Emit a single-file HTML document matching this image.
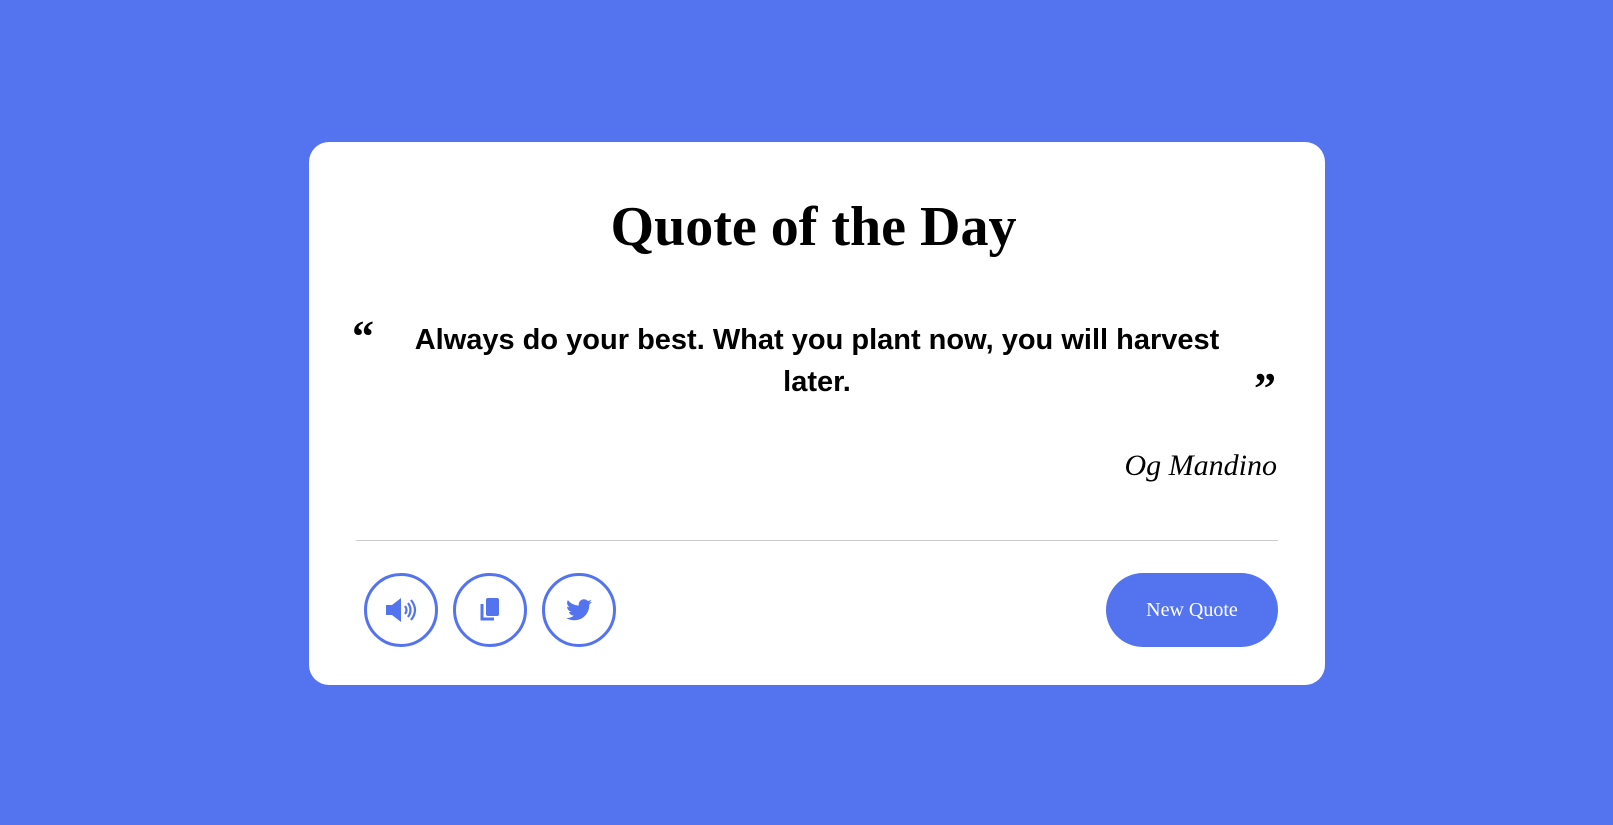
<!DOCTYPE html>
<html><head><style>
body{margin:0;width:1613px;height:825px;background:#5473ef;position:relative;overflow:hidden;font-family:"Liberation Serif",serif}
.card{position:absolute;left:309px;top:142px;width:1016px;height:543px;background:#fff;border-radius:20px}
h1{position:absolute;left:0;right:0;top:192px;margin:0;text-align:center;font-weight:bold;font-size:56px;line-height:70px;color:#000;margin-left:14px}
.q{position:absolute;left:367px;width:900px;top:319px;text-align:center;font-family:"Liberation Sans",sans-serif;font-weight:bold;font-size:29px;line-height:42px;color:#000}
.oq{position:absolute;left:352px;top:320px;font-size:44px;font-weight:bold;font-family:"Liberation Serif",serif;line-height:34px}
.cq{position:absolute;left:1254px;top:372px;font-size:44px;font-weight:bold;font-family:"Liberation Serif",serif;line-height:34px}
.au{position:absolute;right:336px;top:449px;font-style:italic;font-size:30px}
.hr{position:absolute;left:356px;width:922px;top:540px;height:1px;background:#ccc}
.c{position:absolute;top:573px;width:68px;height:68px;border:3px solid #5473ef;border-radius:50%;display:flex;align-items:center;justify-content:center}
.btn{position:absolute;left:1106px;top:573px;width:172px;height:74px;border-radius:37px;background:#5473ef;color:#fff;font-size:20px;display:flex;align-items:center;justify-content:center}
</style></head><body>
<div class="card"></div>
<h1>Quote of the Day</h1>
<div class="oq">“</div>
<div class="q">Always do your best. What you plant now, you will harvest<br>later.</div>
<div class="cq">”</div>
<div class="au">Og Mandino</div>
<div class="hr"></div>
<div class="c" style="left:364px"><svg width="34" height="28" viewBox="0 0 34 28"><path d="M2 9h6l9-7v24l-9-7H2z" fill="#5473ef"/><path d="M21 10q3 4 0 8M24 7q5 7 0 14M27 4q8 10 0 20" stroke="#5473ef" stroke-width="2.2" fill="none"/></svg></div>
<div class="c" style="left:453px"><svg width="24" height="26" viewBox="0 0 24 26"><rect x="8" y="1" width="13" height="18" rx="2" fill="#5473ef"/><path d="M4 7v15h12" stroke="#5473ef" stroke-width="3" fill="none"/></svg></div>
<div class="c" style="left:542px"><svg width="26" height="22" viewBox="0 0 24 20"><path d="M24 2.4a9.8 9.8 0 0 1-2.8.8 4.9 4.9 0 0 0 2.1-2.7 9.9 9.9 0 0 1-3.1 1.2A4.9 4.9 0 0 0 11.8 6 14 14 0 0 1 1.7.9a4.9 4.9 0 0 0 1.5 6.6 4.9 4.9 0 0 1-2.2-.6 4.9 4.9 0 0 0 3.9 4.8 4.9 4.9 0 0 1-2.2.1 4.9 4.9 0 0 0 4.6 3.4A9.9 9.9 0 0 1 0 17.3 14 14 0 0 0 7.5 19.5c9.1 0 14-7.5 14-14v-.6A10 10 0 0 0 24 2.4z" fill="#5473ef"/></svg></div>
<div class="btn">New Quote</div>
</body></html>
